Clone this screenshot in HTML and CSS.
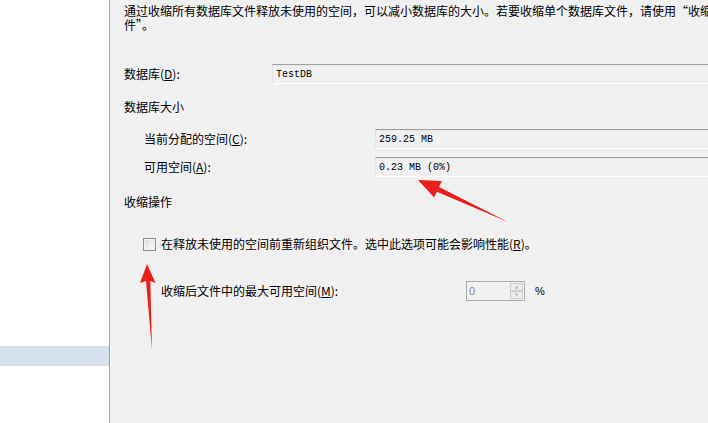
FILE: index.html
```html
<!DOCTYPE html>
<html lang="zh-CN">
<head>
<meta charset="utf-8">
<title>收缩数据库</title>
<link rel="stylesheet" href="styles.css">
</head>
<body>
<div class="window">
  <aside class="nav">
    <div class="nav-item selected"></div>
  </aside>
  <main class="content">
    <div class="desc">
      <div class="desc-line">通过收缩所有数据库文件释放未使用的空间，可以减小数据库的大小。若要收缩单个数据库文件，请使用“收缩文件”任务。</div>
      <div class="desc-line">件”。</div>
    </div>

    <div class="row row-db">
      <span class="label label-db">数据库(<u>D</u>):</span>
      <div class="field">TestDB</div>
    </div>

    <div class="heading heading-size">数据库大小</div>

    <div class="row row-alloc">
      <span class="label label-sub">当前分配的空间(<u>C</u>):</span>
      <div class="field">259.25 MB</div>
    </div>
    <div class="row row-avail">
      <span class="label label-sub">可用空间(<u>A</u>):</span>
      <div class="field">0.23 MB (0%)</div>
    </div>

    <div class="heading heading-op">收缩操作</div>

    <label class="check-row">
      <span class="checkbox"></span>
      <span>在释放未使用的空间前重新组织文件。选中此选项可能会影响性能(<u>R</u>)。</span>
    </label>

    <div class="row row-max">
      <span class="label label-max">收缩后文件中的最大可用空间(<u>M</u>):</span>
      <div class="spinner">
        <span class="spin-value">0</span>
        <span class="spin-buttons">
          <span class="spin-btn">▲</span>
          <span class="spin-btn">▼</span>
        </span>
      </div>
      <span class="percent">%</span>
    </div>
  </main>
</div>
<svg class="arrows" width="708" height="423" viewBox="0 0 708 423">
  <polygon points="418,180 441.8,181.1 439.1,186.9 508,222 436.9,191.8 434.2,197.5" fill="#e8201c"/>
  <polygon points="147,264 155.5,283 150.3,281 152,350 146,281 140,283" fill="#e8201c"/>
</svg>
</body>
</html>
```
FILE: styles.css
```css
html, body {
  margin: 0;
  padding: 0;
}
body {
  width: 708px;
  height: 423px;
  overflow: hidden;
  position: relative;
  font-family: "Noto Sans CJK SC", "Liberation Sans", sans-serif;
  font-size: 12px;
  color: #000;
  background: #f0f0f0;
}
u {
  text-decoration: underline;
  text-underline-offset: 1px;
}
.window {
  display: flex;
  height: 423px;
}
.nav {
  width: 109px;
  flex: none;
  background: #fff;
  border-right: 1px solid #a0a0a0;
  padding-top: 346px;
  box-sizing: content-box;
}
.nav-item {
  height: 20px;
}
.nav-item.selected {
  background: #d6e1ee;
}
.content {
  flex: 1;
  min-width: 0;
  background: #f0f0f0;
  padding: 4px 0 0 14px;
  overflow: hidden;
  line-height: 14px;
}
.desc-line {
  white-space: nowrap;
  height: 14px;
}
.row {
  display: flex;
  align-items: center;
  height: 20px;
}
.label {
  flex: none;
  white-space: nowrap;
}
.label-db { width: 148px; }
.label-sub { width: 231px; padding-left: 20px; }
.label-max { width: 305px; padding-left: 37px; }
.row-db { margin-top: 32px; }
.heading-size { margin-top: 16px; }
.row-alloc { margin-top: 15px; }
.row-avail { margin-top: 8px; }
.heading-op { margin-top: 18px; }
.check-row {
  margin-top: 28px;
  display: flex;
  align-items: center;
  gap: 5px;
  padding-left: 19px;
  height: 14px;
  white-space: nowrap;
}
.row-max { margin-top: 30px; }
.field {
  flex: none;
  width: 500px;
  height: 20px;
  box-sizing: border-box;
  border-top: 1px solid #a0a0a0;
  border-left: 1px solid #e3e3e3;
  border-bottom: 1px solid #fdfdfd;
  box-shadow: inset 0 1px 0 #e6e6e6;
  background: #f0f0f0;
  font-family: "Liberation Mono", "DejaVu Sans Mono", monospace;
  font-size: 10px;
  line-height: 19px;
  padding-left: 3px;
  white-space: nowrap;
}
.checkbox {
  width: 13px;
  height: 13px;
  box-sizing: border-box;
  border: 1px solid #8e8f8f;
  background: linear-gradient(135deg, #dcdcdc, #fbfbfb);
  box-shadow: inset 0 0 0 1px #f2f2f2;
  flex: none;
}
.spinner {
  width: 59px;
  height: 20px;
  box-sizing: border-box;
  border: 1px solid #acacac;
  background: #f0f0f0;
  display: flex;
  align-items: stretch;
}
.spin-value {
  flex: 1;
  font-family: "Liberation Sans", sans-serif;
  font-size: 11px;
  color: #8a8a8a;
  line-height: 18px;
  padding-left: 2px;
}
.spin-buttons {
  width: 13px;
  display: flex;
  flex-direction: column;
  margin: 1px 1px 1px 0;
  gap: 0;
}
.spin-btn {
  flex: 1;
  border: 1px solid #cfcfcf;
  background: #ececec;
  color: #b4b4b4;
  font-size: 4px;
  line-height: 6px;
  text-align: center;
  font-family: "DejaVu Sans", sans-serif;
}
.percent {
  margin-left: 10px;
  font-family: "Liberation Sans", sans-serif;
  font-size: 11px;
}
.arrows {
  position: absolute;
  left: 0;
  top: 0;
  pointer-events: none;
}
```
